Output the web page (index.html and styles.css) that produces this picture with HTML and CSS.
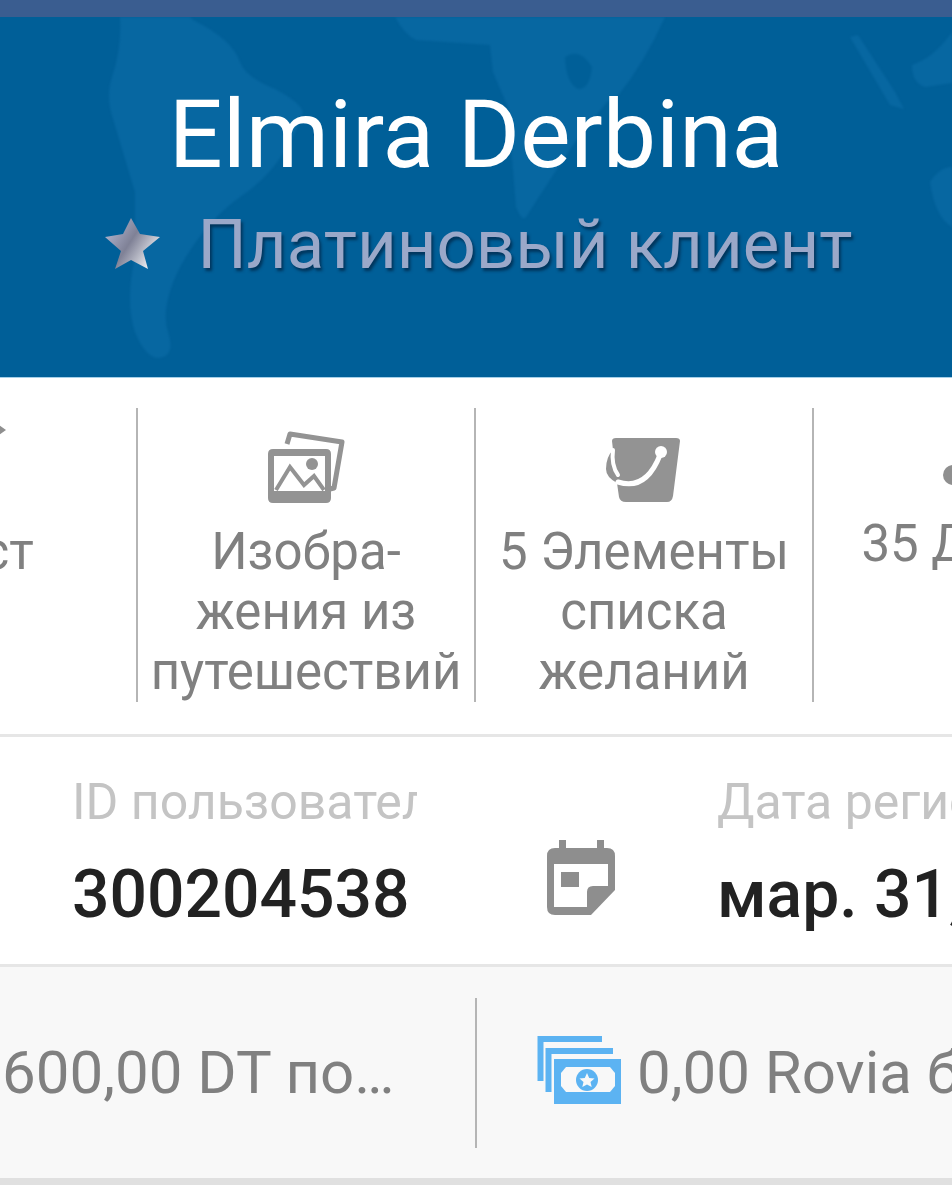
FILE: index.html
```html
<!DOCTYPE html>
<html lang="ru">
<head>
    <meta charset="utf-8">
    <title>Elmira Derbina</title>
    <link rel="stylesheet" href="styles.css">
</head>
<body>
    <div class="top-bar"></div>

    <!-- hero -->
    <div class="hero">
        <svg class="hero-map" viewBox="0 0 952 360" preserveAspectRatio="none">
            <path d="M120 0 Q122 30 112 60 Q105 80 114 105 L135 175 L135 240 Q125 285 135 315 Q145 340 158 341 Q176 340 168 315 Q160 290 180 250 Q205 205 240 180 Q285 150 303 95 Q300 85 275 72 Q245 60 240 45 Q232 22 193 3 L190 0 Z"/>
            <path d="M395 0 Q405 18 416 23 L490 28 L493 55 L508 90 L516 190 Q522 205 526 200 Q545 170 575 125 L607 85 L617 80 Q645 45 665 0 Z"/>
            <path d="M565 40 Q580 30 592 50 Q590 72 578 72 Q566 66 565 40 Z" class="hero-map-hole"/>
            <path d="M850 20 L858 18 L895 75 L904 92 L890 88 Z"/>
            <path d="M912 48 Q935 40 952 15 V66 L925 70 Q912 66 912 48 Z"/>
            <path d="M930 165 Q940 150 952 150 V210 Q935 200 930 165 Z"/>
        </svg>
        <h1 class="hero-name">Elmira Derbina</h1>
        <div class="hero-tier">
            <svg class="tier-star" viewBox="0 0 56 54">
                <defs>
                    <linearGradient id="starFill" x1="0" y1="0.1" x2="1" y2="0.7">
                        <stop offset="0" stop-color="#b9bdd8"/>
                        <stop offset="0.5" stop-color="#7f8196"/>
                        <stop offset="1" stop-color="#f4f6f8"/>
                    </linearGradient>
                </defs>
                <path fill="url(#starFill)" d="M26 1 L35 17 L55 20 L38 34 L43 52 L26 43 L10 52 L16 34 L0 20 L18 17 Z"/>
            </svg>
            <span>Платиновый клиент</span>
        </div>
    </div>

    <!-- stats -->
    <div class="stats">
        <div class="stat">
            <svg class="stat-icon stat-icon-edge" viewBox="0 35 80 76"><path fill="#8f8f8f" d="M60 22 L78 35 L60 48 Z"/></svg>
            <div class="stat-text stat-text-short">0 мест</div>
        </div>
        <div class="stat">
            <svg class="stat-icon" viewBox="0 0 80 76">
                <path fill="none" stroke="#939393" stroke-width="5" stroke-linejoin="round" d="M21 14 L24 4 L76 12 L68 58 L60 60"/>
                <path fill="#939393" fill-rule="evenodd" d="M7 19 H60 Q65 19 65 24 V68 Q65 73 60 73 H7 Q2 73 2 68 V24 Q2 19 7 19 Z M8 26 V61 H59 V26 Z"/>
                <path fill="none" stroke="#939393" stroke-width="4" d="M10 60 L24 37 L38 55 L48 46 L58 60"/>
                <circle cx="46" cy="34" r="6" fill="#939393"/>
            </svg>
            <div class="stat-text">Изобра-<br>жения из<br>путешествий</div>
        </div>
        <div class="stat">
            <svg class="stat-icon" viewBox="0 -7 80 76">
                <path fill="#939393" d="M8 4 Q8 1 12 1 H72 Q76 1 76 4 L69 59 Q68 65 63 65 H22 Q16 65 15 60 L13 46 Q2 40 2 32 Q2 20 9 13 Z"/>
                <path fill="none" stroke="#fff" stroke-width="4" stroke-linecap="round" d="M9 13 Q7 28 14 38"/>
                <path fill="none" stroke="#fff" stroke-width="5" stroke-linecap="round" d="M14 45 Q42 54 56 18"/>
                <circle cx="57" cy="15" r="6" fill="#fff"/>
            </svg>
            <div class="stat-text">5 Элементы<br>списка<br>желаний</div>
        </div>
        <div class="stat">
            <svg class="stat-icon" viewBox="0 0 80 70"><ellipse cx="10" cy="42" rx="10" ry="10" fill="#8f8f8f"/></svg>
            <div class="stat-text stat-text-raised">35 Друзей</div>
        </div>
    </div>

    <!-- account info -->
    <div class="info">
        <div class="info-col info-id">
            <div class="info-label">ID пользователя</div>
            <div class="info-value">300204538</div>
        </div>
        <svg class="info-icon" viewBox="0 0 68 76">
            <path fill="#8e8e8e" fill-rule="evenodd" d="M12 0 H19 V8 H50 V0 H57 V8 H60 Q68 8 68 16 V50 L44 75 H8 Q0 75 0 67 V16 Q0 8 8 8 H12 Z M7 24 V67 H40 V52 Q40 46 46 46 H61 V24 Z"/>
            <rect x="14" y="32" width="18" height="15" fill="#8e8e8e"/>
        </svg>
        <div class="info-col">
            <div class="info-label">Дата регистрации</div>
            <div class="info-value">мар. 31, 2017</div>
        </div>
    </div>

    <!-- balance -->
    <div class="balance">
        <div class="balance-cell balance-cell-left">600,00 DT по…</div>
        <div class="balance-cell balance-cell-right">
            <svg class="balance-icon" viewBox="0 0 84 68">
                <path fill="none" stroke="#5cb3f2" stroke-width="6" d="M3.500 45 V3 H65"/>
                <path fill="none" stroke="#5cb3f2" stroke-width="6" d="M11.500 56 V15 H76"/>
                <rect x="17" y="23" width="67" height="45" fill="#5cb3f2"/>
                <path fill="#f8f8f8" d="M29 31 H73 L78 37 V50 L73 56 H29 L24 50 V37 Z"/>
                <circle cx="50" cy="44" r="11" fill="#5cb3f2"/>
                <path fill="#f8f8f8" d="M50 37 L52.200 42 L57.500 42.500 L53.500 46 L54.700 51 L50 48.400 L45.300 51 L46.500 46 L42.500 42.500 L47.800 42 Z"/>
            </svg>
            <span class="balance-text">0,00 Rovia баллов</span>
        </div>
    </div>
    <div class="page-end"></div>
</body>
</html>
```

FILE: styles.css
```css
* {margin: 0;padding: 0;box-sizing: border-box;}
html, body {width: 952px;height: 1189px;overflow: hidden;}
body {background: #fff;font-family: Roboto, "Noto Sans", sans-serif;}

.top-bar {height: 17px;background: #3a5d90;}

/* hero */
.hero {height: 361px;position: relative;overflow: hidden;background: #005f98;border-bottom: 1px solid #a5cfe8;color: #fff;display: flex;flex-direction: column;align-items: center;padding-top: 66px;}
.hero-map {position: absolute;left: 0;top: 0;width: 100%;height: 360px;fill: #0767a1;filter: blur(1px);}
.hero-map-hole {fill: #005f98;}
.hero-name {position: relative;font-size: 95px;font-weight: 400;line-height: 104px;white-space: nowrap;}
.hero-tier {position: relative;display: flex;align-items: center;gap: 37px;margin-top: 16px;padding-left: 5px;font-size: 69px;line-height: 84px;color: #9aa8c9;text-shadow: 2px 3px 3px rgba(0,30,60,0.65);white-space: nowrap;}
.tier-star {width: 56px;height: 54px;margin-top: -2px;}

/* stats */
.stats {height: 356px;display: flex;justify-content: center;padding-top: 30px;}
.stat {flex: 0 0 338px;height: 294px;border-right: 2px solid #b5b5b5;text-align: center;color: #808080;font-size: 51px;line-height: 60px;white-space: nowrap;}
.stat:last-child {border-right: 0;}
.stat-icon {display: block;width: 80px;height: 76px;margin: 22px auto 16px;}
.stat-icon-edge {overflow: visible;}
.stat-text-short {padding-right: 26px;}
.stat-text-raised {margin-top: -8px;}

/* account info */
.info {height: 233px;display: flex;align-items: center;border-top: 3px solid #e6e6e6;border-bottom: 3px solid #e6e6e6;padding: 3px 0 0 72px;}
.info-col {flex: none;}
.info-id {width: 345px;overflow: hidden;}
.info-label {font-size: 50px;line-height: 56px;color: #c4c4c4;white-space: nowrap;}
.info-value {margin-top: 29px;font-size: 66px;line-height: 72px;font-weight: 500;color: #222;white-space: nowrap;}
.info-icon {flex: none;width: 68px;height: 76px;margin: 52px 102px 0 130px;}

/* balance */
.balance {height: 211px;display: flex;align-items: center;background: #f8f8f8;color: #808080;font-size: 60px;white-space: nowrap;}
.balance-cell {height: 150px;display: flex;align-items: center;}
.balance-cell-left {flex: 0 0 477px;padding-left: 2px;border-right: 2px solid #b5b5b5;}
.balance-cell-right {padding-left: 60px;}
.balance-icon {flex: none;width: 84px;height: 68px;margin: 0 16px 6px 0;}

.page-end {height: 7px;background: #e0e0e0;}
```
